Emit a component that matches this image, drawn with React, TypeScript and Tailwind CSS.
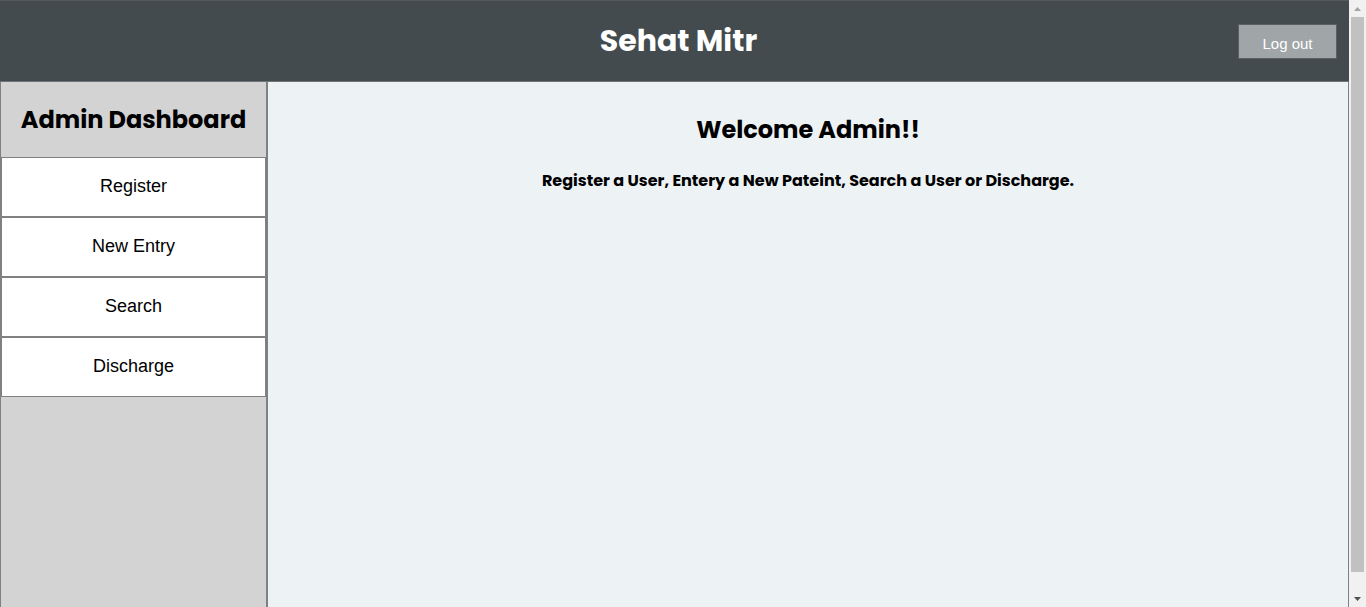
import React from "react";

const poppins = "font-['Poppins','Open_Sans','Liberation_Sans',sans-serif]";

export default function App() {
  const items = ["Register", "New Entry", "Search", "Discharge"];
  return (
    <div className="h-[607px] flex overflow-hidden">
      <div className="flex-1 flex flex-col min-w-0">
        <header className="h-[82px] bg-[#434b4e] border-t border-t-[#54595b] border-b border-b-[#6f7476] flex items-center relative shrink-0">
          <h1 className={`flex-1 text-center text-white text-[30px] font-bold pl-[8px] pb-[2px] ${poppins}`}>Sehat Mitr</h1>
          <button className="absolute right-[12px] top-[23px] w-[99px] h-[35px] bg-[#a0a5a7] border border-[#5b6062] text-white text-[15px] pt-[5px] font-['Liberation_Sans',Arial,sans-serif]">
            Log out
          </button>
        </header>
        <div className="flex flex-1">
          <aside className="w-[268px] shrink-0 bg-[#d3d3d3] border-l border-l-[#808080] border-r-2 border-r-[#808080]">
            <div className="h-[75px] flex items-center justify-center">
              <h2 className={`text-[24px] font-bold text-black ${poppins}`}>Admin Dashboard</h2>
            </div>
            {items.map((t) => (
              <div
                key={t}
                className="h-[60px] bg-white border border-[#808080] flex items-center justify-center pb-[2px] text-[18px] text-black font-['Liberation_Sans',Arial,sans-serif]"
              >
                {t}
              </div>
            ))}
          </aside>
          <main className="flex-1 bg-[#edf2f5] border-r border-r-[#808080] text-center">
            <h2 className={`mt-[30px] text-[24px] font-bold text-black ${poppins}`}>Welcome Admin!!</h2>
            <p className={`mt-[21px] text-[16px] font-bold text-black ${poppins}`}>
              Register a User, Entery a New Pateint, Search a User or Discharge.
            </p>
          </main>
        </div>
      </div>
      <div className="w-[17px] shrink-0 bg-[#f1f1f1] flex flex-col items-center">
        <div className="h-[17px] flex items-center justify-center">
          <svg width="7" height="4" viewBox="0 0 7 4"><path d="M3.5 0L7 4H0z" fill="#a3a3a3" /></svg>
        </div>
        <div className="w-[13px] h-[555px] bg-[#c1c1c1] ml-[1px] mr-[1px]" />
        <div className="flex-1 flex items-end justify-center pb-[6px]">
          <svg width="7" height="4" viewBox="0 0 7 4"><path d="M0 0H7L3.5 4z" fill="#505050" /></svg>
        </div>
      </div>
    </div>
  );
}
